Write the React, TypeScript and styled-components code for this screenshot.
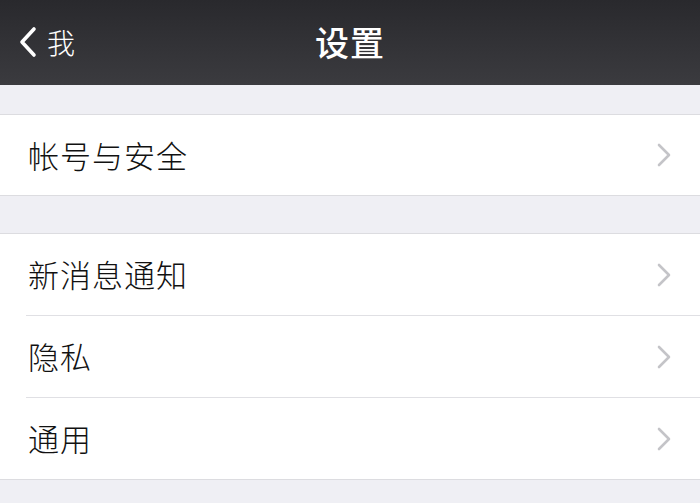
import React from "react";
import styled, { createGlobalStyle } from "styled-components";

const GlobalStyle = createGlobalStyle`
  html, body {
    margin: 0;
    padding: 0;
    background: #efeff4;
    font-family: "Noto Sans CJK SC", "Noto Sans", sans-serif;
  }
`;

const Page = styled.div`
  width: 700px;
  min-height: 503px;
  background: #efeff4;
`;

const NavBar = styled.header`
  position: relative;
  height: 85px;
  display: flex;
  align-items: center;
  justify-content: center;
  background: linear-gradient(#29292d, #3b3b3f);
  color: #fff;
`;

const Back = styled.div`
  position: absolute;
  left: 18px;
  top: 0;
  bottom: 0;
  display: flex;
  align-items: center;
  gap: 9px;
  font-size: 28px;
  font-weight: 300;
  padding-bottom: 2px;
`;

const Title = styled.h1`
  margin: 0;
  font-size: 34px;
  font-weight: 500;
  letter-spacing: 1px;
  padding-bottom: 2px;
`;

const Group = styled.section<{ $gap: number; $rowHeight: number }>`
  margin-top: ${(p) => p.$gap}px;
  background: #fff;
  border-top: 1px solid #dcdce0;
  border-bottom: 1px solid #dcdce0;
  --row-height: ${(p) => p.$rowHeight}px;
`;

const Row = styled.div`
  height: var(--row-height);
  display: flex;
  align-items: center;
  padding-left: 28px;
  padding-right: 28px;
  & + & {
    border-top: 1px solid #e0e0e4;
    margin-left: 26px;
    padding-left: 2px;
  }
`;

const Label = styled.span`
  flex: 1;
  font-size: 31px;
  font-weight: 300;
  color: #111;
  letter-spacing: 1px;
  padding-bottom: 2px;
`;

const Chevron = () => (
  <svg width="16" height="26" viewBox="0 0 16 26">
    <path d="M3 3 L13 13 L3 23" fill="none" stroke="#c4c4c8" strokeWidth="2.6" strokeLinecap="round" strokeLinejoin="round" />
  </svg>
);

const BackArrow = () => (
  <svg width="20" height="32" viewBox="0 0 20 32">
    <path d="M16 3 L4 16 L16 29" fill="none" stroke="#fff" strokeWidth="3.6" strokeLinecap="round" strokeLinejoin="round" />
  </svg>
);

const groups = [
  { gap: 29, rowHeight: 80, items: ["帐号与安全"] },
  { gap: 37, rowHeight: 81, items: ["新消息通知", "隐私", "通用"] },
];

export default function App() {
  return (
    <Page>
      <GlobalStyle />
      <NavBar>
        <Back>
          <BackArrow />
          <span>我</span>
        </Back>
        <Title>设置</Title>
      </NavBar>
      {groups.map((g, i) => (
        <Group key={i} $gap={g.gap} $rowHeight={g.rowHeight}>
          {g.items.map((item) => (
            <Row key={item}>
              <Label>{item}</Label>
              <Chevron />
            </Row>
          ))}
        </Group>
      ))}
    </Page>
  );
}
